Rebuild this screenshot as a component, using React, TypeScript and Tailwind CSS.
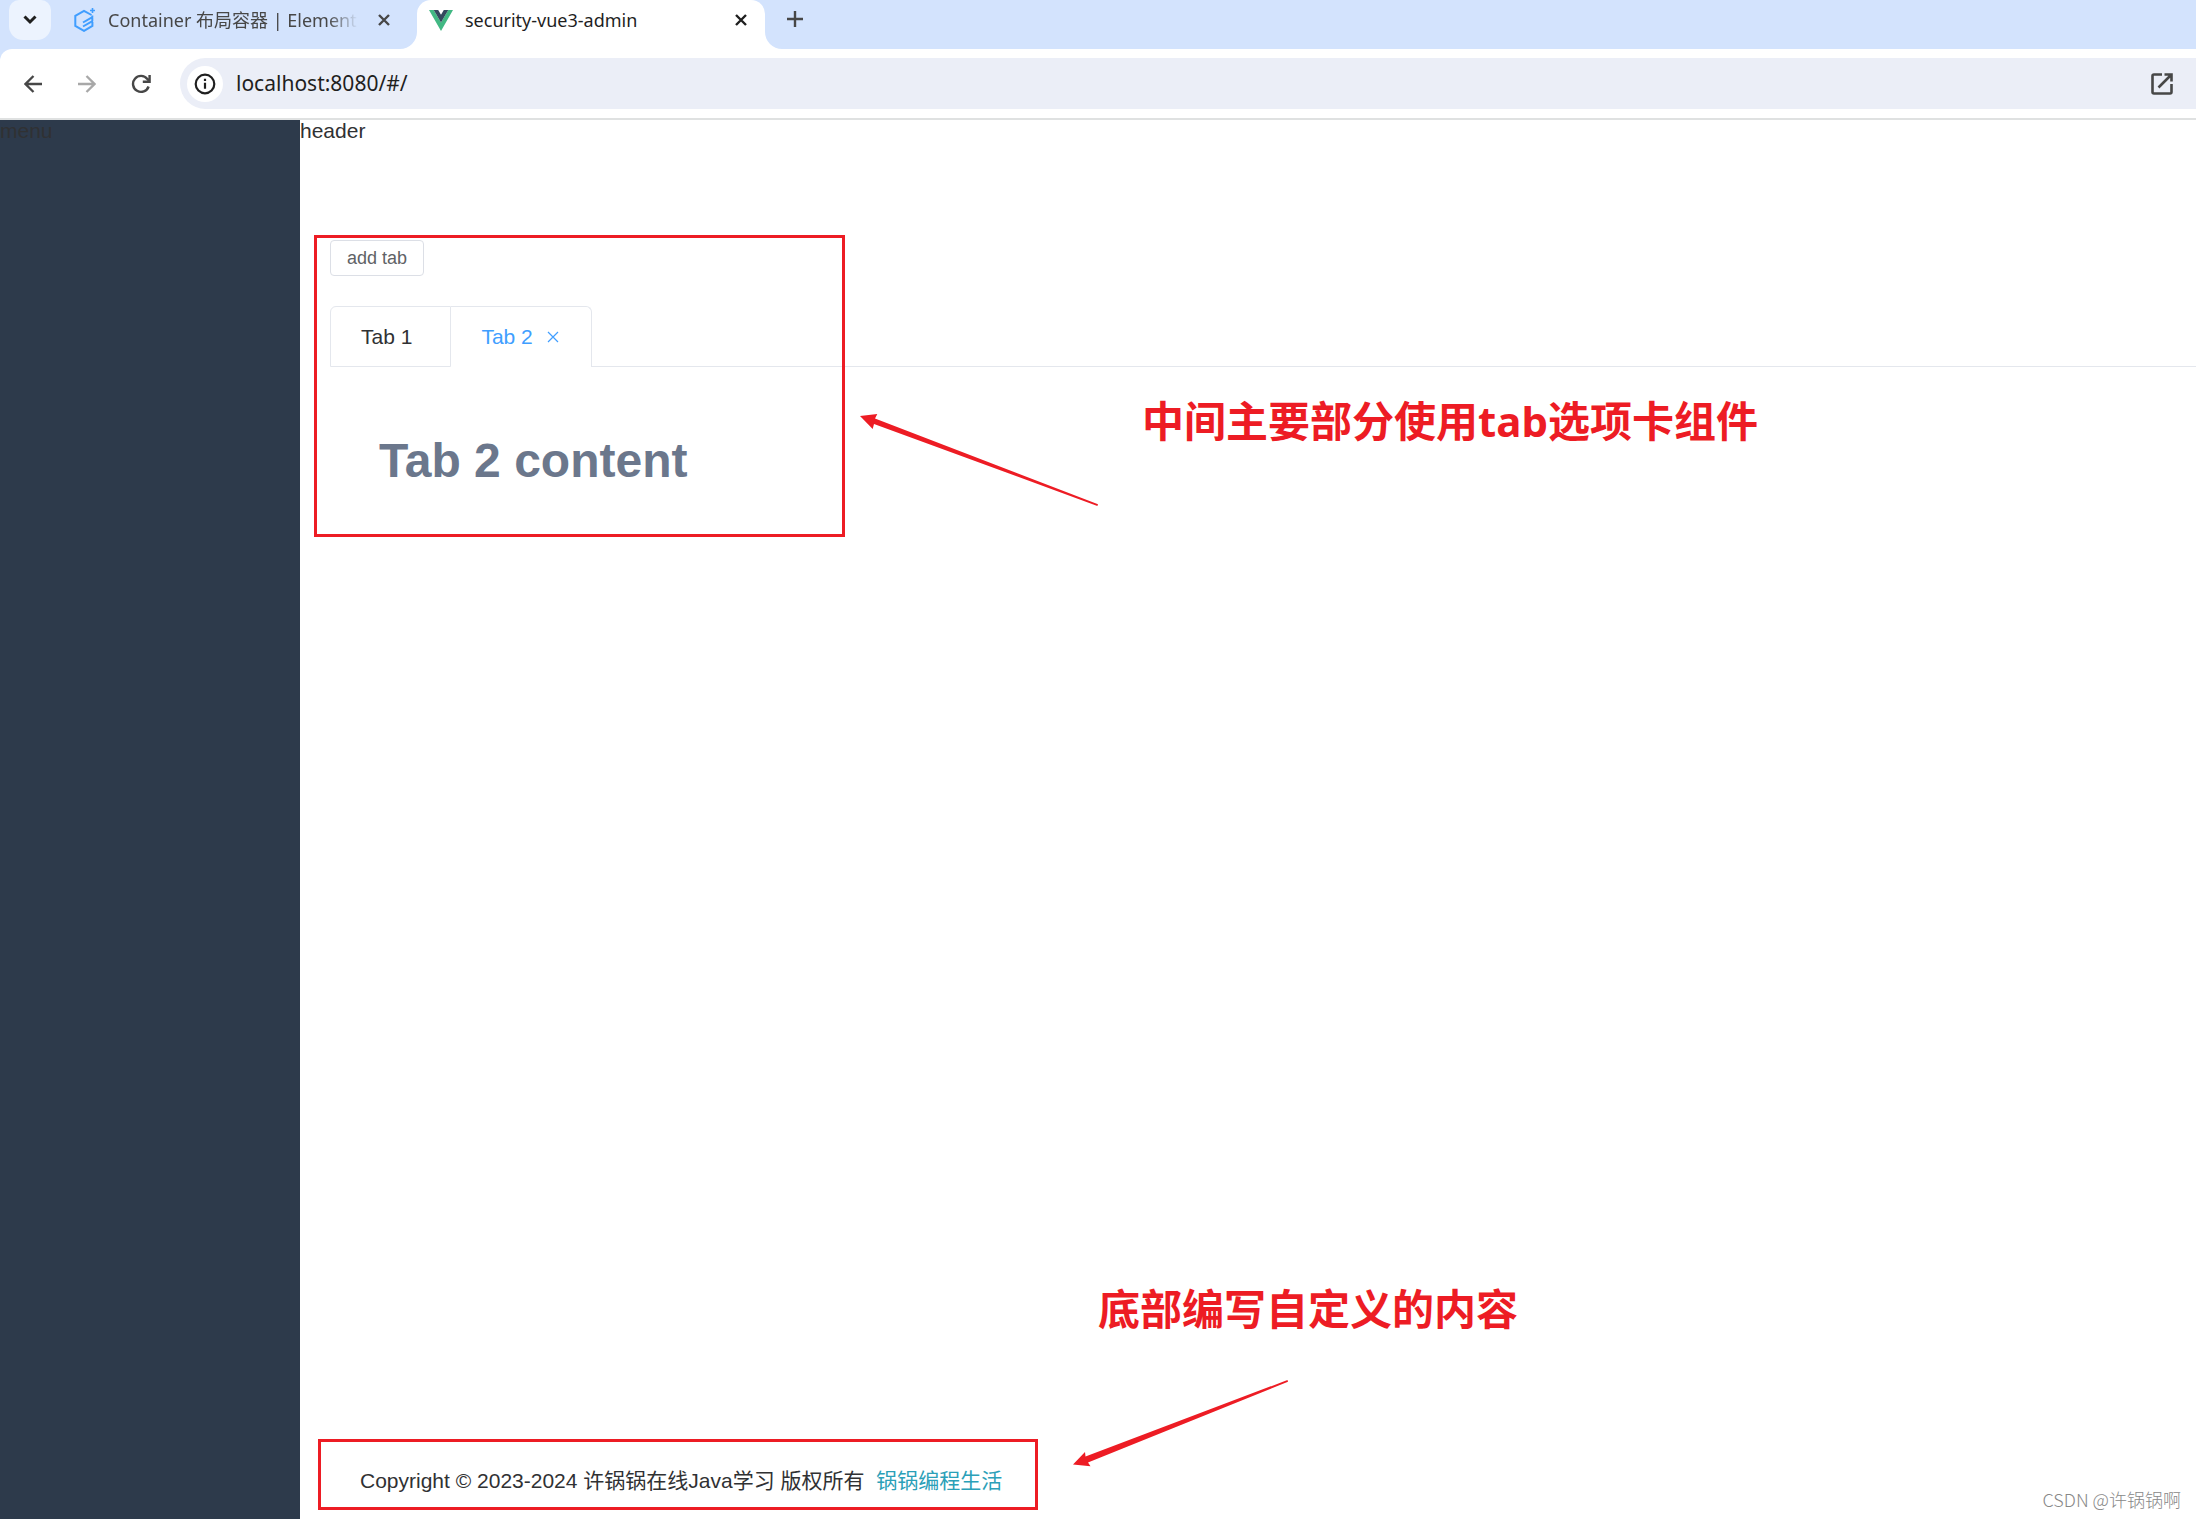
import { useState } from "react";

const RED = "#ed1c24";

const ChevronIcon = () => (
  <svg width="14" height="10" viewBox="0 0 14 10" fill="none" stroke="#1f1f1f" strokeWidth="3">
    <path d="M1.5 1.5 7 7l5.500-5.500" />
  </svg>
);

const CloseIcon = ({ color, size = 12, width = 2.4 }: { color: string; size?: number; width?: number }) => (
  <svg width={size} height={size} viewBox="0 0 12 12" fill="none" stroke={color} strokeWidth={width}>
    <path d="M1 1l10 10M11 1 1 11" />
  </svg>
);

const PlusIcon = () => (
  <svg width="16" height="16" viewBox="0 0 16 16" fill="none" stroke="#474747" strokeWidth="2.4">
    <path d="M8 0v16M0 8h16" />
  </svg>
);

const ElementLogo = () => (
  <svg width="22" height="24" viewBox="0 0 22 24" fill="none" stroke="#409eff">
    <path d="M17.500 7 10 2.800 1.300 7.800v10.100L10 22.900l8.400-5v-4" strokeWidth="2" />
    <path d="M18.800 8.800 9 14.500M18.800 12.800 9 18.500M18.300 7.500v5.500" strokeWidth="2" />
    <path d="M18.500 0v5M16 2.500h5" strokeWidth="1.600" />
  </svg>
);

const VueLogo = () => (
  <svg width="24" height="21" viewBox="0 0 24 21">
    <path d="M0 0h4.700L12 12.500 19.300 0H24L12 21z" fill="#41b883" />
    <path d="M4.700 0h4.500L12 4.800 14.800 0h4.500L12 12.500z" fill="#34495e" />
  </svg>
);

const ArrowIcon = ({ color, flip }: { color: string; flip?: boolean }) => (
  <svg width="18" height="18" viewBox="0 0 18 18" fill="none" stroke={color} strokeWidth="2.3">
    {flip ? <path d="M0 9h16M8.500 1l8 8-8 8" /> : <path d="M18 9H2M9.500 1l-8 8 8 8" />}
  </svg>
);

const ReloadIcon = () => (
  <svg width="20" height="20" viewBox="0 0 20 20" fill="none" stroke="#474747" strokeWidth="2.4">
    <path d="M17.600 12.500a8 8 0 1 1-1.300-7.600l1.900 2" />
    <path d="M18.600 1v6.800h-6.800" />
  </svg>
);

const InfoIcon = () => (
  <svg width="22" height="22" viewBox="0 0 22 22" fill="none" stroke="#1f1f1f" strokeWidth="2.2">
    <circle cx="11" cy="11" r="9.300" />
    <path d="M11 9.800v6M11 5.800v2.300" />
  </svg>
);

const OpenIcon = () => (
  <svg width="24" height="24" viewBox="0 0 24 24" fill="none" stroke="#474747" strokeWidth="2.6">
    <path d="M12 2.500H4A1.500 1.500 0 0 0 2.500 4v16A1.500 1.500 0 0 0 4 21.500h16a1.500 1.500 0 0 0 1.500-1.500v-8" />
    <path d="M14.500 2.500h7V9.500M21 3 8.500 15.500" />
  </svg>
);

// curved foot on either side of the active browser tab
const TabFoot = ({ right }: { right?: boolean }) => (
  <svg width="17" height="17" viewBox="0 0 17 17" fill="#fff" className="self-end">
    {right ? <path d="M0 0v17h17A17 17 0 0 1 0 0z" /> : <path d="M17 0v17H0A17 17 0 0 0 17 0z" />}
  </svg>
);

const BrowserChrome = () => (
  <div className="bg-[#d3e3fd] font-['Noto_Sans','Noto_Sans_CJK_SC',sans-serif] text-lg text-[#1f1f1f]">
    <div className="flex h-[49px]">
      <button aria-label="Search tabs" className="ml-[9px] flex h-10 w-[42px] items-center justify-center rounded-b-[14px] rounded-t-[10px] bg-[#ecf3fe]">
        <ChevronIcon />
      </button>
      <div className="ml-[23px] flex h-10 w-[326px] items-center">
        <ElementLogo />
        <span className="ml-3 w-[250px] overflow-hidden whitespace-nowrap text-[#474747] [mask-image:linear-gradient(to_right,#000_88%,transparent_100%)]">
          Container 布局容器 | Element
        </span>
        <button aria-label="Close tab" className="ml-5"><CloseIcon color="#474747" /></button>
      </div>
      <TabFoot />
      <div className="flex w-[348px] items-start rounded-t-[14px] bg-white">
        <div className="flex h-10 grow items-center pl-3 pr-[18px]">
          <VueLogo />
          <span className="ml-3 grow">security-vue3-admin</span>
          <button aria-label="Close tab"><CloseIcon color="#1f1f1f" /></button>
        </div>
      </div>
      <TabFoot right />
      <button aria-label="New tab" className="ml-[5px] flex h-[38px] items-center"><PlusIcon /></button>
    </div>
    <div className="flex h-[71px] items-center rounded-tl-xl border-b-2 border-[#dfe1e1] bg-white pl-6">
      <button aria-label="Back"><ArrowIcon color="#474747" /></button>
      <button aria-label="Forward" className="ml-9"><ArrowIcon color="#a8a8a8" flip /></button>
      <button aria-label="Reload" className="ml-[35px]"><ReloadIcon /></button>
      <div className="ml-[29px] flex h-[51px] grow items-center rounded-l-full bg-[#ebeef7] pl-[7px] pr-[22px]">
        <button aria-label="Site information" className="flex size-9 items-center justify-center rounded-full bg-white">
          <InfoIcon />
        </button>
        <input aria-label="Address" defaultValue="localhost:8080/#/" className="ml-[13px] grow bg-transparent text-[21px] outline-none" />
        <button aria-label="Open in new window"><OpenIcon /></button>
      </div>
    </div>
  </div>
);

const tabs = [
  { name: "1", title: "Tab 1", content: "Tab 1 content", closable: false },
  { name: "2", title: "Tab 2", content: "Tab 2 content", closable: true },
];

const EditableTabs = () => {
  const [active, setActive] = useState("2");

  return (
    <div className="mt-[30px]">
      <div role="tablist" className="flex h-[61px]">
        {tabs.map((tab) => (
          <div
            key={tab.name}
            className={`flex items-center border-t border-r border-[#e4e7ed] first:rounded-tl-md first:border-l ${
              active === tab.name ? "text-[#409eff]" : "border-b text-[#303133]"
            } ${tab.closable ? "rounded-tr-md pr-8 pl-[30px]" : "pr-[38px] pl-[30px]"}`}
          >
            <button role="tab" aria-selected={active === tab.name} onClick={() => setActive(tab.name)}>
              {tab.title}
            </button>
            {tab.closable && (
              <button aria-label={`Close ${tab.title}`} className="ml-[14px]">
                <CloseIcon color="#409eff" width={1.2} />
              </button>
            )}
          </div>
        ))}
        <div className="grow border-b border-[#e4e7ed]" />
      </div>
      <div role="tabpanel" className="p-12 pl-[49px] text-5xl leading-[92px] font-bold text-[#6b778c]">
        {tabs.find((tab) => tab.name === active)?.content}
      </div>
    </div>
  );
};

const App = () => (
  <div className="flex min-h-screen flex-col bg-white">
    <BrowserChrome />
    <div className="flex grow font-['Liberation_Sans','Noto_Sans_CJK_SC',sans-serif] text-[21px] leading-[22px] text-[#303133]">
      <aside className="w-[300px] shrink-0 bg-[#2d3a4b]">menu</aside>
      <div className="relative flex grow flex-col">
        <header className="h-[90px]">header</header>
        <main className="grow pt-[30px] pl-[30px]">
          <button className="block h-9 rounded border border-[#dcdfe6] px-4 text-lg text-[#606266]">add tab</button>
          <EditableTabs />
        </main>
        <footer className="flex h-[90px] items-center pt-[14px] pl-[60px]">
          <p>
            Copyright © 2023-2024 许锅锅在线Java学习 版权所有&nbsp;&nbsp;
            <a href="#" className="text-[#2ba0b8]">锅锅编程生活</a>
          </p>
        </footer>

        {/* callouts drawn over the page */}
        <div className="pointer-events-none absolute top-[115px] left-[14px] h-[302px] w-[531px] border-3 border-[#ed1c24]" />
        <svg className="pointer-events-none absolute top-[292px] left-[560px]" width="240" height="96" viewBox="0 0 240 96" fill={RED}>
          <path d="M0 4 17.300 2 15 6.500 238 92.300l-.6 1.700L14 12l-1.300 5z" />
        </svg>
        <p className="absolute top-[271px] left-[842px] font-['Noto_Sans','Noto_Sans_CJK_SC',sans-serif] text-[42px] leading-[60px] font-bold text-[#ed1c24]">
          中间主要部分使用tab选项卡组件
        </p>
        <p className="absolute bottom-[180px] left-[798px] font-['Noto_Sans','Noto_Sans_CJK_SC',sans-serif] text-[42px] leading-[60px] font-bold text-[#ed1c24]">
          底部编写自定义的内容
        </p>
        <svg className="pointer-events-none absolute bottom-[49px] left-[773px]" width="216" height="90" viewBox="0 0 216 90" fill={RED}>
          <path d="M0 84.500 12 72l.5 4.500L214.500 0l.5 1.800L15 82.500l2.500 3.700z" />
        </svg>
        <div className="pointer-events-none absolute bottom-[9px] left-[18px] h-[71px] w-[720px] border-3 border-[#ed1c24]" />
        <span className="absolute right-[15px] bottom-2 font-['Noto_Sans_CJK_SC',sans-serif] text-lg leading-6 font-light text-[#888]">
          CSDN @许锅锅啊
        </span>
      </div>
    </div>
  </div>
);

export default App;
